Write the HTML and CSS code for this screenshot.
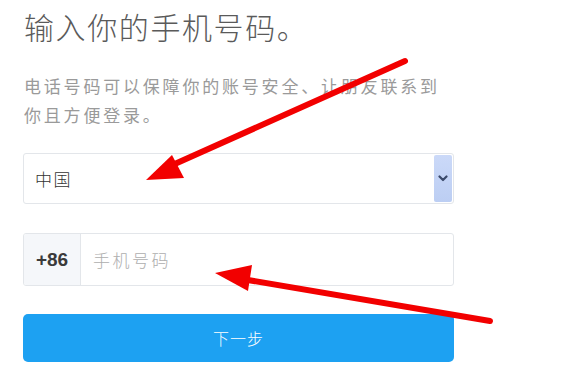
FILE: index.html
```html
<!DOCTYPE html>
<html lang="zh-CN">
<head>
<meta charset="utf-8">
<title>输入你的手机号码</title>
<link rel="stylesheet" href="styles.css">
</head>
<body>
<main class="page">
  <h1 class="title">输入你的手机号码。</h1>
  <p class="desc">电话号码可以保障你的账号安全、让朋友联系到你且方便登录。</p>
  <div class="select">
    <span class="select-value">中国</span>
    <span class="select-toggle">
      <svg width="10" height="7" viewBox="0 0 10 7"><path d="M1.5 1.5 L5 5 L8.5 1.5" fill="none" stroke="#3b4a6b" stroke-width="2.2" stroke-linecap="round" stroke-linejoin="round"/></svg>
    </span>
  </div>
  <div class="phone">
    <span class="prefix">+86</span>
    <span class="placeholder">手机号码</span>
  </div>
  <button class="next">下一步</button>
  <svg class="arrows" width="571" height="373" viewBox="0 0 571 373">
    <line x1="405" y1="61" x2="168" y2="167" stroke="#f20000" stroke-width="6" stroke-linecap="round"/>
    <polygon points="146,180 172,155 184,178" fill="#f20000"/>
    <line x1="490" y1="321" x2="242" y2="279" stroke="#f20000" stroke-width="6" stroke-linecap="round"/>
    <polygon points="215,273 252,265 248,291" fill="#f20000"/>
  </svg>
</main>
</body>
</html>
```
FILE: styles.css
```css
* { box-sizing: border-box; }
html, body { margin: 0; padding: 0; background: #fff; }
body {
  font-family: "Noto Sans CJK SC", "Liberation Sans", sans-serif;
  width: 571px;
  height: 373px;
  overflow: hidden;
}
.page {
  position: relative;
  padding: 6px 0 0 23px;
  width: 571px;
  height: 373px;
}
.title {
  margin: 0 0 0 1px;
  font-size: 30px;
  line-height: 40px;
  font-weight: 300;
  letter-spacing: 1.6px;
  color: #5a5a5a;
}
.desc {
  margin: 25px 0 0 1px;
  width: 428px;
  font-size: 17px;
  line-height: 29px;
  letter-spacing: 2.8px;
  color: #9a9a9a;
  font-weight: 400;
}
.select {
  margin-top: 24px;
  width: 431px;
  height: 51px;
  border: 1px solid #e3e6ea;
  border-radius: 3px;
  display: flex;
  align-items: center;
  padding: 2px 1px 2px 11px;
}
.select-value {
  flex: 1;
  font-size: 17px;
  letter-spacing: 1.5px;
  color: #333;
  font-weight: 300;
}
.select-toggle {
  width: 18px;
  height: 47px;
  border-radius: 2px;
  background: linear-gradient(#cbd9f8, #bccef3);
  display: flex;
  align-items: center;
  justify-content: center;
}
.phone {
  margin-top: 29px;
  width: 431px;
  height: 53px;
  border: 1px solid #e3e6ea;
  border-radius: 3px;
  display: flex;
  align-items: stretch;
  overflow: hidden;
}
.prefix {
  width: 57px;
  background: #f5f7fa;
  border-right: 1px solid #e3e6ea;
  display: flex;
  align-items: center;
  justify-content: center;
  font-family: "Liberation Sans", sans-serif;
  font-weight: bold;
  font-size: 19px;
  color: #3a3a3a;
}
.placeholder {
  display: flex;
  align-items: center;
  padding-left: 12px;
  font-size: 17px;
  letter-spacing: 2.5px;
  color: #aeaeae;
  font-weight: 300;
}
.next {
  display: block;
  margin-top: 28px;
  width: 431px;
  height: 48px;
  border: none;
  border-radius: 5px;
  background: #1da1f2;
  color: #fff;
  font-family: "Noto Sans CJK SC", sans-serif;
  font-size: 16px;
  font-weight: 300;
  letter-spacing: 1px;
}
.arrows {
  position: absolute;
  left: 0;
  top: 0;
  pointer-events: none;
}
```
